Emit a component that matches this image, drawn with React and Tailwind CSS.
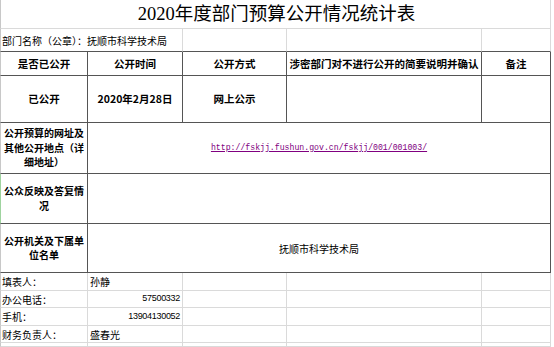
import React from "react";

const cjk = { fontFamily: '"Noto Sans CJK SC", "Noto Sans", sans-serif' };

function Lines({ lines }) {
  return (
    <div className="flex flex-col items-center">
      {lines.map((l) => (
        <div key={l} className="h-[14.5px] leading-[14.5px] whitespace-nowrap">{l}</div>
      ))}
    </div>
  );
}

export default function App() {
  return (
    <div
      className="w-[554px] h-[347px] overflow-hidden bg-white text-black grid grid-cols-[88px_95px_104px_195px_69px_3px] grid-rows-[29px_23px_24px_47px_51px_50px_49px_18px_17px_18px_17px_1fr]"
      style={cjk}
    >
      {/* title */}
      <div className="col-span-5 border-l border-l-[#c8c8c8] border-r border-r-[#dadada] border-b border-b-[#dadada] flex items-center justify-center">
        <span className="text-[18.5px] leading-none pl-[2px]" style={{ fontFamily: '"Liberation Serif", "Noto Sans CJK SC", serif' }}>
          2020年度部门预算公开情况统计表
        </span>
      </div>
      <div />

      {/* department */}
      <div className="col-span-2 border-l border-l-[#c8c8c8] border-r border-r-[#dadada] border-b border-b-[#555] flex items-center pl-[1px] text-[10px] whitespace-nowrap">
        部门名称（公章）：抚顺市科学技术局
      </div>
      <div className="border-r border-r-[#dadada] border-b border-b-[#555]" />
      <div className="border-r border-r-[#dadada] border-b border-b-[#555]" />
      <div className="border-r border-r-[#dadada] border-b border-b-[#555]" />
      <div />

      {/* header */}
      <div className="border-l border-l-[#c8c8c8] border-r border-b border-[#555] flex items-center justify-center text-[10.5px] font-bold">是否已公开</div>
      <div className="border-r border-b border-[#555] flex items-center justify-center text-[10.5px] font-bold">公开时间</div>
      <div className="border-r border-b border-[#555] flex items-center justify-center text-[10.5px] font-bold">公开方式</div>
      <div className="border-r border-b border-[#555] flex items-center justify-center text-[10.5px] font-bold whitespace-nowrap">涉密部门对不进行公开的简要说明并确认</div>
      <div className="border-r border-b border-[#555] flex items-center justify-center text-[10.5px] font-bold">备注</div>
      <div />

      {/* status row */}
      <div className="border-l border-l-[#c8c8c8] border-r border-b border-[#555] flex items-center justify-center text-[10.5px] font-bold">已公开</div>
      <div className="border-r border-b border-[#555] flex items-center justify-center text-[10.5px] font-bold">2020年2月28日</div>
      <div className="border-r border-b border-[#555] flex items-center justify-center text-[10.5px] font-bold">网上公示</div>
      <div className="border-r border-b border-[#555]" />
      <div className="border-r border-b border-[#555]" />
      <div />

      {/* url row */}
      <div className="border-l border-l-[#c8c8c8] border-r border-b border-[#555] flex items-center justify-center text-[10px] font-bold">
        <Lines lines={["公开预算的网址及", "其他公开地点（详", "细地址）"]} />
      </div>
      <div className="col-span-4 border-r border-b border-[#555] flex items-center justify-center">
        <a
          href="#"
          className="text-[8.2px] text-[#800080] underline"
          style={{ fontFamily: '"Liberation Mono", monospace' }}
        >
          http://fskjj.fushun.gov.cn/fskjj/001/001003/
        </a>
      </div>
      <div />

      {/* feedback row */}
      <div className="border-l border-l-[#9fd39f] border-r border-b border-[#555] flex items-center justify-center text-[10px] font-bold">
        <Lines lines={["公众反映及答复情", "况"]} />
      </div>
      <div className="col-span-4 border-r border-b border-[#555]" />
      <div />

      {/* organisation row */}
      <div className="border-l border-l-[#c8c8c8] border-r border-b border-[#555] flex items-center justify-center text-[10px] font-bold">
        <Lines lines={["公开机关及下属单", "位名单"]} />
      </div>
      <div className="col-span-4 border-r border-b border-[#555] flex items-center justify-center text-[10px]">抚顺市科学技术局</div>
      <div />

      {/* contact rows */}
      {[
        ["填表人：", "孙静", false],
        ["办公电话：", "57500332", true],
        ["手机：", "13904130052", true],
        ["财务负责人：", "盛春光", false],
        ["", "", false],
      ].map(([label, value, num], i) => (
        <React.Fragment key={i}>
          <div className="border-l border-l-[#c8c8c8] border-r border-b border-[#dadada] flex items-center pl-[1px] text-[10px] whitespace-nowrap">{label}</div>
          {num ? (
            <div
              className="border-r border-b border-[#dadada] flex items-center justify-end pr-[2px] text-[9px] tracking-[-0.3px]"
              style={{ fontFamily: '"Liberation Sans", sans-serif' }}
            >
              {value}
            </div>
          ) : (
            <div className="border-r border-b border-[#dadada] flex items-center pl-[2px] text-[10px]">{value}</div>
          )}
          <div className="border-r border-b border-[#dadada]" />
          <div className="border-r border-b border-[#dadada]" />
          <div className="border-r border-b border-[#dadada]" />
          <div />
        </React.Fragment>
      ))}
    </div>
  );
}
